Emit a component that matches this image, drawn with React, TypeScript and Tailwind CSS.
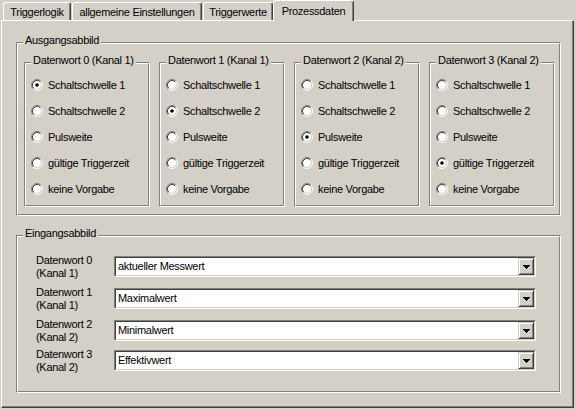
import React from 'react';

const bg = 'bg-[#d4d0c8]';

const tabs = [
  { name: 'Triggerlogik', w: 'w-[68px]', active: false },
  { name: 'allgemeine Einstellungen', w: 'ml-px w-[130px]', active: false },
  { name: 'Triggerwerte', w: 'ml-px w-[70px]', active: false },
  { name: 'Prozessdaten', w: 'w-[81px]', active: true },
];

const options = [
  'Schaltschwelle 1',
  'Schaltschwelle 2',
  'Pulsweite',
  'gültige Triggerzeit',
  'keine Vorgabe',
];

const outputs = [
  { title: 'Datenwort 0 (Kanal 1)', selected: 0 },
  { title: 'Datenwort 1 (Kanal 1)', selected: 1 },
  { title: 'Datenwort 2 (Kanal 2)', selected: 2 },
  { title: 'Datenwort 3 (Kanal 2)', selected: 3 },
];

const inputs = [
  { line1: 'Datenwort 0', line2: '(Kanal 1)', value: 'aktueller Messwert', mt: '' },
  { line1: 'Datenwort 1', line2: '(Kanal 1)', value: 'Maximalwert', mt: 'mt-[11px]' },
  { line1: 'Datenwort 2', line2: '(Kanal 2)', value: 'Minimalwert', mt: 'mt-[11px]' },
  { line1: 'Datenwort 3', line2: '(Kanal 2)', value: 'Effektivwert', mt: 'mt-[9px]' },
];

// etched windows group box, label sits on the top line
const Group = ({
  label,
  className,
  children,
}: {
  label: string;
  className: string;
  children?: React.ReactNode;
}) => (
  <div
    className={`relative border border-t-[#808080] border-l-[#808080] border-r-white border-b-white ${className}`}
  >
    <div className="h-full border border-t-white border-l-white border-r-[#808080] border-b-[#808080]">
      {children}
    </div>
    <span className={`absolute -top-[9px] left-[6px] px-[2px] ${bg}`}>{label}</span>
  </div>
);

const Radio = ({ checked }: { checked: boolean }) => (
  <svg width="12" height="12" viewBox="0 0 12 12" className="shrink-0">
    <circle cx="6" cy="6" r="4.2" fill="#fff" />
    <path d="M2.11 9.89A5.5 5.5 0 0 1 9.89 2.11" fill="none" stroke="#808080" />
    <path d="M9.89 2.11A5.5 5.5 0 0 1 2.11 9.89" fill="none" stroke="#fff" />
    <path d="M2.82 9.18A4.5 4.5 0 0 1 9.18 2.82" fill="none" stroke="#404040" />
    <path d="M9.18 2.82A4.5 4.5 0 0 1 2.82 9.18" fill="none" stroke="#d4d0c8" />
    {checked && <circle cx="6" cy="6" r="1.8" fill="#000" />}
  </svg>
);

const Combo = ({ value }: { value: string }) => (
  <div className="flex h-[21px] w-[422px] border border-t-[#808080] border-l-[#808080] border-r-white border-b-white">
    <div className="flex flex-1 items-center border border-t-[#404040] border-l-[#404040] border-r-[#d4d0c8] border-b-[#d4d0c8] bg-white">
      <span className="flex-1 pl-[2px]">{value}</span>
      <div
        className={`flex h-[17px] w-[16px] items-center justify-center border border-t-[#d4d0c8] border-l-[#d4d0c8] border-r-[#404040] border-b-[#404040] shadow-[inset_1px_1px_0_#fff,inset_-1px_-1px_0_#808080] ${bg}`}
      >
        <svg width="7" height="4" viewBox="0 0 7 4" shapeRendering="crispEdges">
          <rect x="0" y="0" width="7" height="1" fill="#000" />
          <rect x="1" y="1" width="5" height="1" fill="#000" />
          <rect x="2" y="2" width="3" height="1" fill="#000" />
          <rect x="3" y="3" width="1" height="1" fill="#000" />
        </svg>
      </div>
    </div>
  </div>
);

const App = () => {
  return (
    <div
      className={`h-[409px] w-[576px] overflow-hidden ${bg} font-['Liberation_Sans',Arial,sans-serif] text-[11px] leading-[13px] tracking-[-0.3px] text-black`}
    >
      <div className="flex h-[20px] items-end pl-[3px]">
        {tabs.map((tab) =>
          tab.active ? (
            <div
              key={tab.name}
              className={`relative z-10 -mb-px h-[21px] ${tab.w} rounded-t-[3px] border-l border-t border-r border-l-white border-t-white border-r-[#404040] pt-[4px] text-center shadow-[inset_-1px_0_0_#808080] ${bg}`}
            >
              {tab.name}
            </div>
          ) : (
            <div
              key={tab.name}
              className={`h-[18px] ${tab.w} rounded-t-[3px] border-l border-t border-r border-l-white border-t-white border-r-[#404040] pt-[3px] text-center shadow-[inset_-1px_0_0_#808080]`}
            >
              {tab.name}
            </div>
          ),
        )}
      </div>

      <section className="ml-px h-[388px] w-[573px] border border-t-white border-l-white border-r-[#404040] border-b-[#404040] pl-[14px] pt-[21px] shadow-[inset_-1px_-1px_0_#808080]">
        <Group label="Ausgangsabbild" className="h-[174px] w-[545px]">
          <div className="flex gap-[9px] pl-[6px] pt-[18px]">
            {outputs.map((out) => (
              <Group key={out.title} label={out.title} className="h-[145px] w-[126px]">
                <div className="flex flex-col pl-[5px] pt-[8px]">
                  {options.map((opt, idx) => (
                    <label key={opt} className="flex h-[26px] items-center gap-[5px]">
                      <Radio checked={idx === out.selected} />
                      <span>{opt}</span>
                    </label>
                  ))}
                </div>
              </Group>
            ))}
          </div>
        </Group>

        <Group label="Eingangsabbild" className="mt-[19px] h-[158px] w-[545px]">
          <div className="flex flex-col pl-[18px] pt-[19px]">
            {inputs.map((row) => (
              <div key={row.line1} className={`flex h-[21px] items-start ${row.mt}`}>
                <div className="-mt-[2px] h-[21px] w-[78px]">
                  <div>{row.line1}</div>
                  <div>{row.line2}</div>
                </div>
                <Combo value={row.value} />
              </div>
            ))}
          </div>
        </Group>
      </section>
    </div>
  );
};

export default App;
